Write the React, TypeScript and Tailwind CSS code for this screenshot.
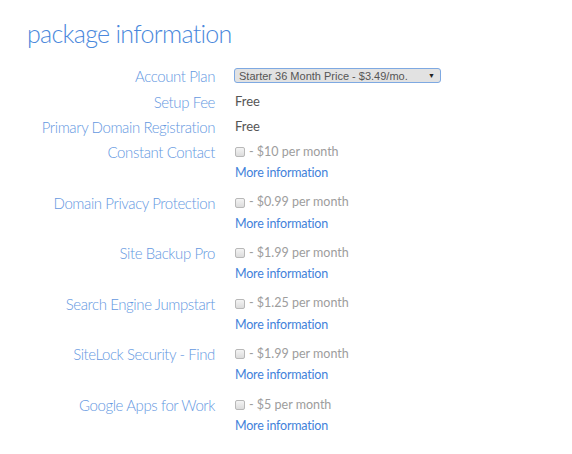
const addons = [
  { label: "Constant Contact", price: "$10" },
  { label: "Domain Privacy Protection", price: "$0.99" },
  { label: "Site Backup Pro", price: "$1.99" },
  { label: "Search Engine Jumpstart", price: "$1.25" },
  { label: "SiteLock Security - Find", price: "$1.99" },
  { label: "Google Apps for Work", price: "$5" },
];

function Label({ children }: { children: React.ReactNode }) {
  return (
    <div className="w-[215px] shrink-0 text-right text-[15px] font-light leading-[24px] tracking-[-0.4px] text-[#6498df]">
      {children}
    </div>
  );
}

function Box() {
  return (
    <span className="inline-block h-[10px] w-[10px] rounded-[2px] border border-[#b8b8b8] bg-gradient-to-b from-[#f4f4f4] to-[#dcdcdc]" />
  );
}

export default function App() {
  return (
    <div className="h-[454px] w-[572px] bg-white font-['Lato',sans-serif]">
      <h1 className="pl-[27px] pt-[15px] text-[25px] font-light leading-[36px] tracking-[-0.7px] text-[#4a88dc]">
        package information
      </h1>
      <div className="mt-[12px] flex flex-col">
        <div className="flex h-[25.7px] items-center">
          <Label>Account Plan</Label>
          <div className="ml-[19px] flex h-[15px] w-[207px] items-center justify-between rounded-[3px] border border-[#7ea9e2] bg-[#e2e2e2] pl-[4px] pr-[5px] font-['Liberation_Sans',sans-serif] text-[11px] text-[#555]">
            <span>Starter 36 Month Price - $3.49/mo.</span>
            <span className="text-[7px] text-[#222]">▼</span>
          </div>
        </div>
        <div className="flex h-[25.7px] items-center">
          <Label>Setup Fee</Label>
          <div className="ml-[20px] text-[13px] text-[#555]">Free</div>
        </div>
        <div className="flex h-[25.7px] items-center">
          <Label>Primary Domain Registration</Label>
          <div className="ml-[20px] text-[13px] text-[#555]">Free</div>
        </div>
        {addons.map((a) => (
          <div key={a.label} className="flex h-[50.6px]">
            <Label>{a.label}</Label>
            <div className="ml-[20px] flex flex-col text-[12.5px]">
              <div className="flex h-[24px] items-center gap-[4px] text-[#9d9d9d]">
                <Box />
                <span>- {a.price} per month</span>
              </div>
              <a className="leading-[18px] tracking-[-0.2px] text-[#4282da]">More information</a>
            </div>
          </div>
        ))}
      </div>
    </div>
  );
}
